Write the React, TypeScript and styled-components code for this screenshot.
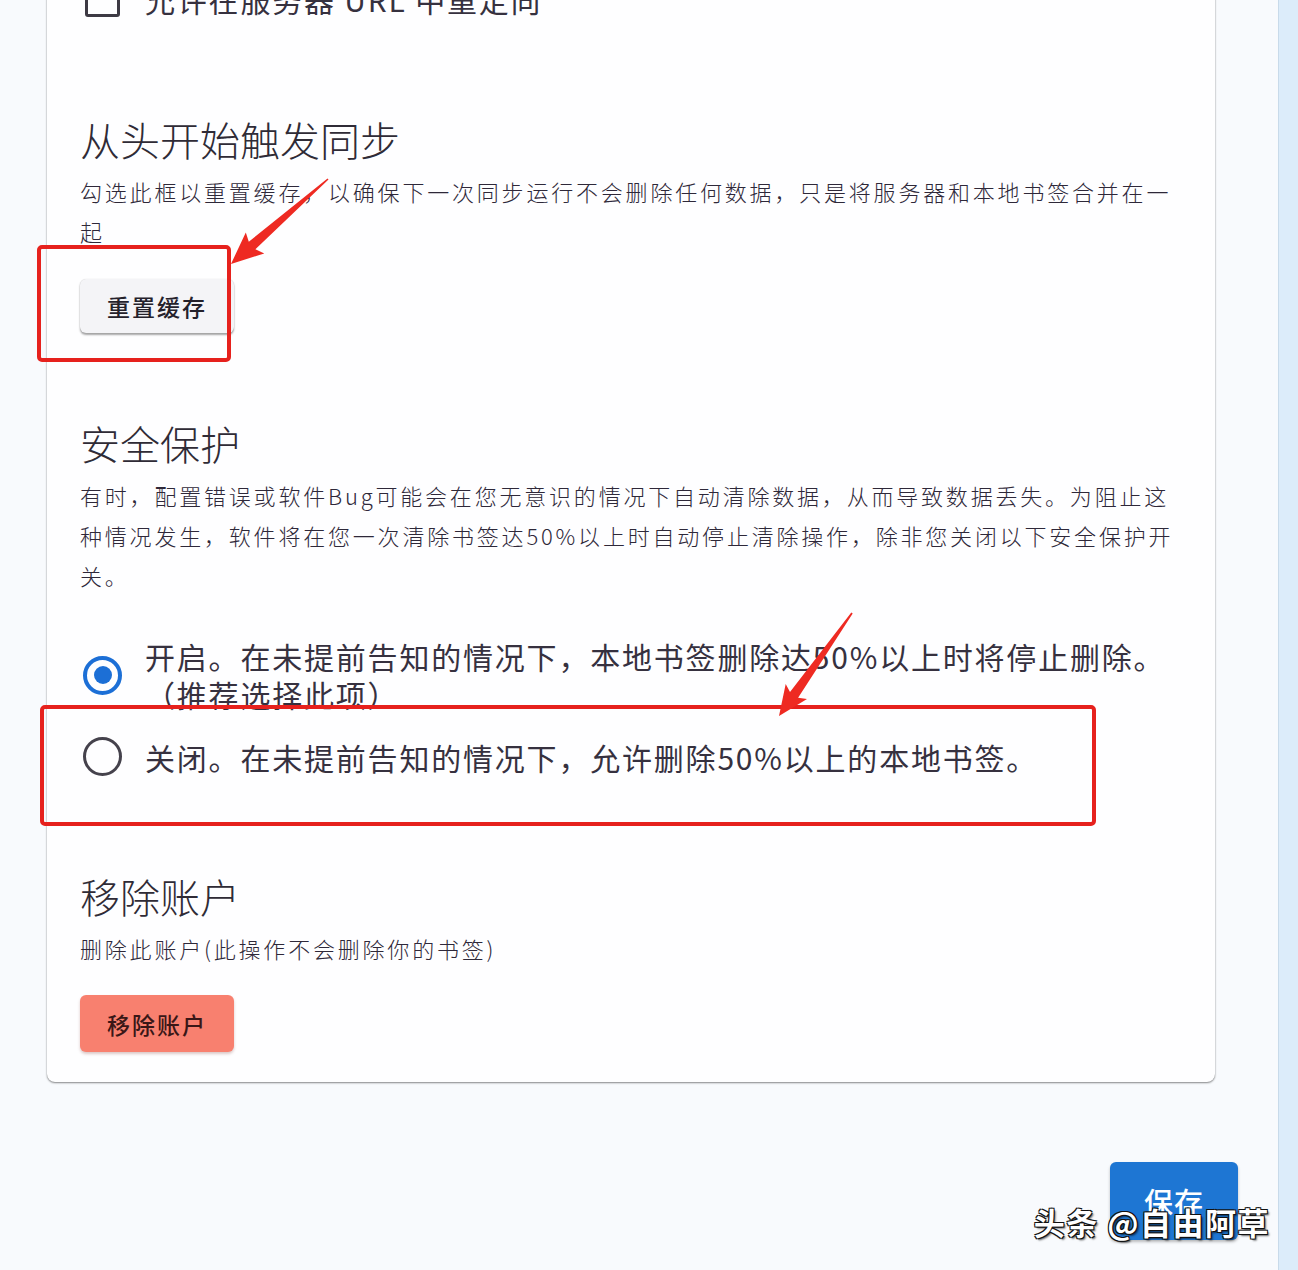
import React from "react";
import styled, { createGlobalStyle } from "styled-components";

const GlobalStyle = createGlobalStyle`
  html, body { margin: 0; padding: 0; }
  body {
    background: #f8fafd;
    font-family: "Noto Sans CJK SC", "Noto Sans", sans-serif;
    color: #36313f;
  }
`;

const Shell = styled.div`
  position: relative;
  display: flex;
  width: 1298px;
  height: 1270px;
  overflow: hidden;
`;

const Main = styled.div`
  flex: 1;
  display: flex;
  flex-direction: column;
  padding: 0 63px 0 47px;
  background: #f8fafd;
`;

const SideStrip = styled.div`
  width: 19px;
  background: #dcecfa;
  border-left: 1px solid #c8daea;
`;

const Card = styled.div`
  margin-top: -40px;
  background: #fefeff;
  border-radius: 0 0 8px 8px;
  box-shadow: 0 1px 2px rgba(0, 0, 0, 0.45), 0 0 1px rgba(0, 0, 0, 0.25);
  padding: 20px 33px 30px;
  display: flex;
  flex-direction: column;
  align-items: flex-start;
`;

const CheckRow = styled.label`
  display: flex;
  align-items: center;
  height: 38px;
  gap: 25px;
  padding-left: 5px;
`;

const CheckBox = styled.span`
  box-sizing: border-box;
  width: 35px;
  height: 35px;
  border: 3px solid #3d3a44;
  border-radius: 3px;
`;

const OptionText = styled.span`
  font-size: 30px;
  line-height: 38px;
  letter-spacing: 1.8px;
  font-weight: 400;
  color: #36313f;
  white-space: nowrap;
`;

const Heading = styled.h2<{ $gap: number }>`
  margin: ${(p) => p.$gap}px 0 0;
  font-size: 40px;
  line-height: 48px;
  font-weight: 300;
  color: #2f2b36;
`;

const Desc = styled.p`
  margin: 8px 0 0;
  font-size: 22px;
  line-height: 40px;
  letter-spacing: 2.8px;
  font-weight: 300;
  color: #2e2839;
`;

const Line = styled.span`
  display: block;
  white-space: nowrap;
`;

const ActionButton = styled.button<{ $tone: "plain" | "danger"; $gap: number; $h: number }>`
  margin-top: ${(p) => p.$gap}px;
  height: ${(p) => p.$h}px;
  padding: 0 27px;
  border: none;
  border-radius: 6px;
  font-family: inherit;
  font-size: 23px;
  font-weight: 500;
  letter-spacing: 2px;
  cursor: pointer;
  background: ${(p) => (p.$tone === "danger" ? "#f8806f" : "#f4f4f7")};
  color: ${(p) => (p.$tone === "danger" ? "#3a1717" : "#24212b")};
  box-shadow: ${(p) =>
    p.$tone === "danger"
      ? "0 2px 3px rgba(120, 40, 30, 0.25)"
      : "0 2px 2px rgba(0, 0, 0, 0.35), 0 0 1px rgba(0,0,0,0.2)"};
`;

const RadioGroup = styled.div`
  margin-top: 42px;
  display: flex;
  flex-direction: column;
  gap: 24px;
`;

const RadioItem = styled.label`
  display: flex;
  align-items: center;
  gap: 23px;
  padding-left: 3px;
`;

const RadioCircle = styled.span<{ $checked: boolean }>`
  box-sizing: border-box;
  flex: none;
  width: 39px;
  height: 39px;
  border-radius: 50%;
  border: ${(p) => (p.$checked ? "4px solid #1c6fd6" : "3px solid #45424c")};
  display: flex;
  align-items: center;
  justify-content: center;
  &::after {
    content: "";
    display: ${(p) => (p.$checked ? "block" : "none")};
    width: 18px;
    height: 18px;
    border-radius: 50%;
    background: #1c6fd6;
  }
`;

const RadioText = styled.span`
  font-size: 30px;
  line-height: 38px;
  letter-spacing: 1.8px;
  color: #36313f;
`;

const SaveRow = styled.div`
  display: flex;
  justify-content: flex-end;
  margin: 80px -23px 0 0;
`;

const SaveButton = styled.button`
  width: 128px;
  height: 78px;
  border: none;
  border-radius: 6px;
  background: #1e76d3;
  color: #ffffff;
  font-family: inherit;
  font-size: 29px;
  font-weight: 500;
  letter-spacing: 1px;
  box-shadow: 0 2px 3px rgba(0, 0, 0, 0.25);
`;

const Watermark = styled.div`
  position: absolute;
  right: 28px;
  bottom: 26px;
  font-size: 31px;
  font-weight: 700;
  letter-spacing: 1.5px;
  color: #ffffff;
  white-space: nowrap;
  text-shadow: 1px 1px 0 #111, -1px -1px 0 #111, 1px -1px 0 #111, -1px 1px 0 #111,
    2px 2px 2px rgba(0, 0, 0, 0.6);
`;

const Overlay = styled.svg`
  position: absolute;
  left: 0;
  top: 0;
  width: 1298px;
  height: 1270px;
  pointer-events: none;
`;

function arrowPoints(tail: [number, number], tip: [number, number], headLen: number, headHalf: number) {
  const dx = tip[0] - tail[0];
  const dy = tip[1] - tail[1];
  const len = Math.hypot(dx, dy);
  const ux = dx / len;
  const uy = dy / len;
  const nx = -uy;
  const ny = ux;
  const bx = tip[0] - ux * headLen;
  const by = tip[1] - uy * headLen;
  const shaft = 5;
  const tailW = 0.8;
  const pts: [number, number][] = [
    [tail[0] + nx * tailW, tail[1] + ny * tailW],
    [bx + nx * shaft + ux * 4, by + ny * shaft + uy * 4],
    [bx + nx * headHalf, by + ny * headHalf],
    [tip[0], tip[1]],
    [bx - nx * headHalf, by - ny * headHalf],
    [bx - nx * shaft + ux * 4, by - ny * shaft + uy * 4],
    [tail[0] - nx * tailW, tail[1] - ny * tailW],
  ];
  return pts.map((p) => `${p[0].toFixed(1)},${p[1].toFixed(1)}`).join(" ");
}

export default function App() {
  return (
    <>
      <GlobalStyle />
      <Shell>
        <Main>
          <Card>
            <CheckRow>
              <CheckBox />
              <OptionText>允许在服务器 URL 中重定向</OptionText>
            </CheckRow>

            <Heading $gap={97}>从头开始触发同步</Heading>
            <Desc>
              <Line>勾选此框以重置缓存，以确保下一次同步运行不会删除任何数据，只是将服务器和本地书签合并在一</Line>
              <Line>起</Line>
            </Desc>
            <ActionButton $tone="plain" $gap={28} $h={54}>
              重置缓存
            </ActionButton>

            <Heading $gap={86}>安全保护</Heading>
            <Desc>
              <Line>有时，配置错误或软件Bug可能会在您无意识的情况下自动清除数据，从而导致数据丢失。为阻止这</Line>
              <Line>种情况发生，软件将在您一次清除书签达50%以上时自动停止清除操作，除非您关闭以下安全保护开</Line>
              <Line>关。</Line>
            </Desc>
            <RadioGroup>
              <RadioItem>
                <RadioCircle $checked />
                <RadioText>
                  <Line>开启。在未提前告知的情况下，本地书签删除达50%以上时将停止删除。</Line>
                  <Line>（推荐选择此项）</Line>
                </RadioText>
              </RadioItem>
              <RadioItem>
                <RadioCircle $checked={false} />
                <RadioText>
                  <Line>关闭。在未提前告知的情况下，允许删除50%以上的本地书签。</Line>
                </RadioText>
              </RadioItem>
            </RadioGroup>

            <Heading $gap={96}>移除账户</Heading>
            <Desc>
              <Line>删除此账户(此操作不会删除你的书签)</Line>
            </Desc>
            <ActionButton $tone="danger" $gap={27} $h={57}>
              移除账户
            </ActionButton>
          </Card>
          <SaveRow>
            <SaveButton>保存</SaveButton>
          </SaveRow>
        </Main>
        <SideStrip />

        <Overlay viewBox="0 0 1298 1270">
          <rect x="39" y="247" width="190" height="113" rx="3" fill="none" stroke="#e6211d" strokeWidth="4" />
          <rect x="42" y="707" width="1052" height="117" rx="3" fill="none" stroke="#e6211d" strokeWidth="4" />
          <polygon points={arrowPoints([328, 179], [231, 264], 32, 14)} fill="#ee2a22" />
          <polygon points={arrowPoints([852, 613], [779, 716], 30, 13)} fill="#ee2a22" />
        </Overlay>
        <Watermark>头条 @自由阿草</Watermark>
      </Shell>
    </>
  );
}
